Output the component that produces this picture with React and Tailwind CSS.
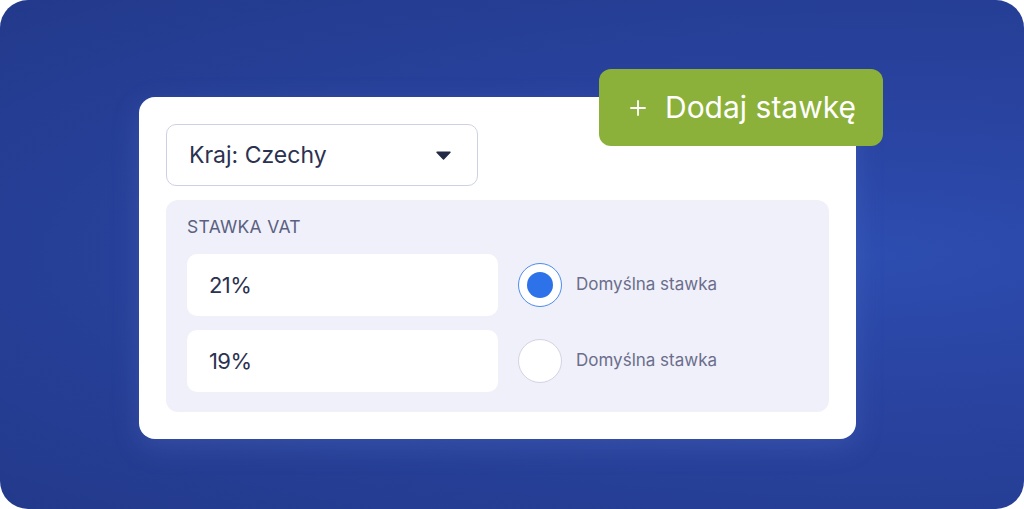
import React from 'react';

const font = { fontFamily: '"Inter", "Noto Sans", sans-serif' };

function RateRow({ value, selected }) {
  return (
    <div className="flex items-center">
      <div className="w-[311px] h-[62px] bg-white rounded-[10px] flex items-center pl-[22px] text-[22px] text-[#2b3150] tracking-[-0.6px]">
        {value}
      </div>
      <div className="ml-[20px] flex items-center gap-[14px]">
        {selected ? (
          <div className="w-[44px] h-[44px] rounded-full bg-white border border-[#4b8cf0] flex items-center justify-center">
            <div className="w-[26px] h-[26px] rounded-full bg-[#2d72e8]" />
          </div>
        ) : (
          <div className="w-[44px] h-[44px] rounded-full bg-white border border-[#d3d4e4]" />
        )}
        <span className="text-[17px] text-[#6a6e8b]">Domyślna stawka</span>
      </div>
    </div>
  );
}

export default function App() {
  return (
    <div className="w-full h-[509px] bg-white" style={font}>
      <div className="w-full h-full rounded-[28px] bg-[radial-gradient(ellipse_at_85%_50%,#2d4db0_0%,#2943a0_40%,#233a8b_100%)] pl-[139px] pt-[97px]">
        <div className="relative w-[717px] h-[342px] bg-white rounded-[16px] p-[27px] shadow-[0_8px_28px_rgba(110,140,225,0.22)]">
          <div className="w-[312px] h-[62px] border border-[#cfd1e2] rounded-[10px] flex items-center justify-between pl-[22px] pr-[26px]">
            <span className="text-[23px] text-[#2b3150]">Kraj: Czechy</span>
            <svg width="15" height="9" viewBox="0 0 15 9">
              <path d="M1 1.2 L14 1.2 L7.5 8 Z" fill="#232a45" stroke="#232a45" strokeLinejoin="round" strokeWidth="1.4" />
            </svg>
          </div>

          <div className="mt-[14px] w-[663px] h-[212px] bg-[#f0f0fa] rounded-[12px] px-[21px] pt-[17px]">
            <div className="text-[17.5px] leading-[20px] text-[#5a6080] tracking-[0.3px]">STAWKA VAT</div>
            <div className="mt-[17px] flex flex-col gap-[14px]">
              <RateRow value="21%" selected />
              <RateRow value="19%" />
            </div>
          </div>

          <div className="absolute left-[460px] top-[-28px] w-[284px] h-[77px] bg-[#8bb13a] rounded-[12px] flex items-center justify-center gap-[19px] pl-[4px] text-white">
            <svg width="16" height="16" viewBox="0 0 16 16">
              <path d="M8 1 V15 M1 8 H15" stroke="#fff" strokeWidth="1.8" strokeLinecap="round" />
            </svg>
            <span className="text-[30px]">Dodaj stawkę</span>
          </div>
        </div>
      </div>
    </div>
  );
}
